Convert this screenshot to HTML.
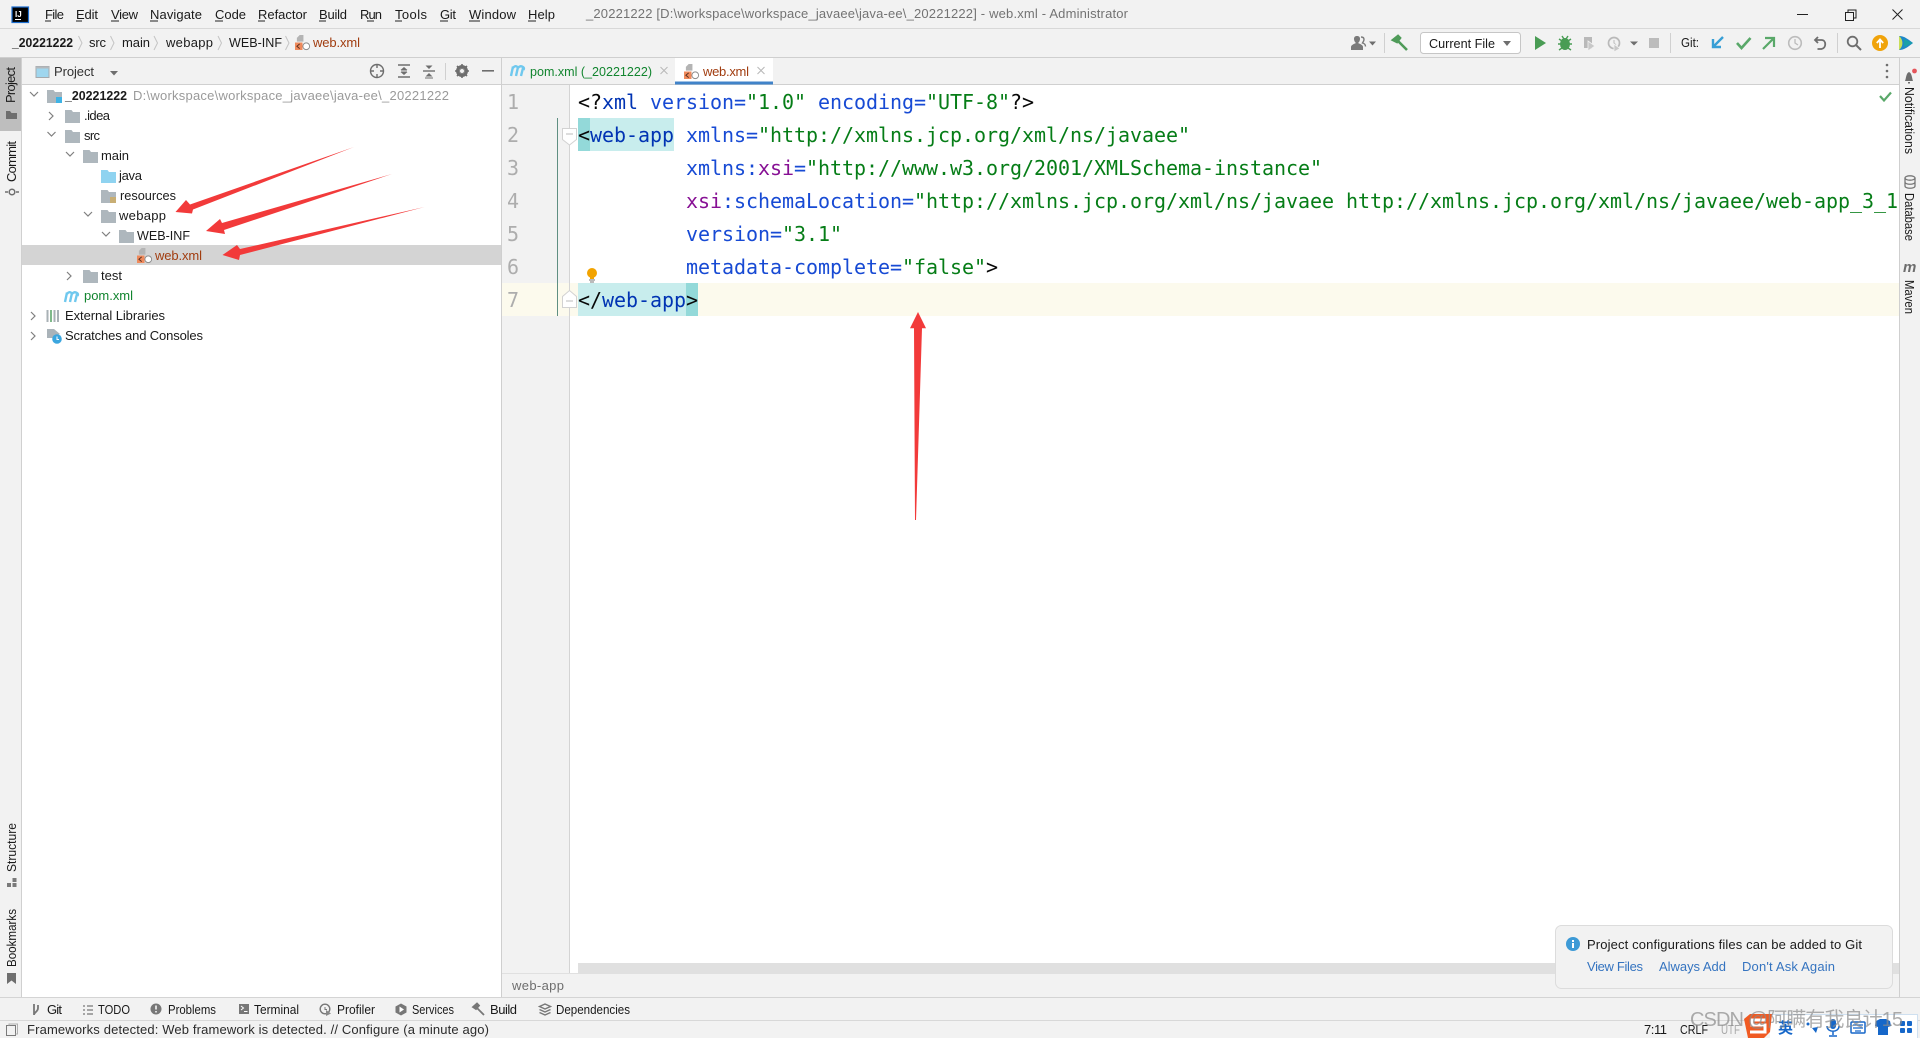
<!DOCTYPE html>
<html><head><meta charset="utf-8"><title>web.xml</title>
<style>
html,body{margin:0;padding:0;background:#f2f2f2;overflow:hidden;width:1920px;height:1038px}
svg{display:block;position:absolute;left:0;top:0}
text{font-family:"Liberation Sans","Noto Sans CJK SC",sans-serif;font-size:13px;fill:#1a1a1a;white-space:pre}
.c{font-family:"DejaVu Sans Mono","Liberation Mono",monospace;font-size:20px}
.g{fill:#adadad}.k{fill:#080808}.t{fill:#0033b3}.a{fill:#174ad4}.v{fill:#067d17}.p{fill:#871094}
.br{fill:#a13d10}.gr{fill:#12852f}.mut{fill:#9a9a9a}.lnk{fill:#3574c0}
.chev{fill:none;stroke:#7f7f7f;stroke-width:1.2}
.ic{fill:none;stroke:#6e6e6e;stroke-width:1.4}
</style></head><body>
<svg width="1920" height="1038" viewBox="0 0 1920 1038" xmlns="http://www.w3.org/2000/svg">
<defs>
<symbol id="folder" viewBox="0 0 15 13" overflow="visible"><path d="M0 0H6.5L8 2H15V13H0Z" fill="#aeb7bd"/></symbol>
<symbol id="xml" viewBox="0 0 16 16" overflow="visible"><path d="M5 0H9V7H2V3Z" fill="#b4b4b4"/><rect x="0" y="8" width="8" height="8" fill="#ef8a5c"/><path d="M5 9.5L2 12l3 2.5" fill="none" stroke="#5a3020" stroke-width="1"/><circle cx="12" cy="12" r="3.6" fill="#fff" stroke="#8c8c8c"/></symbol>
<symbol id="mvn" viewBox="0 0 16 13" overflow="visible"><path d="M1 12L3 2.5M6 12L8 3M11 12L13 4M3 4Q5 1 7.5 3M8 4Q10 1 13 3Q14.5 4 13.5 6" fill="none" stroke="#6fc8ee" stroke-width="2.4"/></symbol>
<clipPath id="ed"><rect x="570" y="85" width="1329" height="880"/></clipPath>
</defs>

<!-- base -->
<rect width="1920" height="1038" fill="#f2f2f2"/>
<rect x="0" y="28" width="1920" height="1" fill="#d8d8d8"/>
<rect x="0" y="57" width="1920" height="1" fill="#cfcfcf"/>

<!-- title bar -->
<rect x="12" y="7" width="16.5" height="15.5" fill="#000" stroke="#1d6fd0" stroke-width="1.2"/>
<text x="15" y="17" style="font-size:8px;font-weight:bold;fill:#fff">IJ</text>
<rect x="15" y="19" width="6" height="1" fill="#fff"/>
<text x="45" y="19" textLength="19">File</text><rect x="45" y="20.5" width="6" height="1" fill="#222"/>
<text x="76" y="19" textLength="22">Edit</text><rect x="76" y="20.5" width="6" height="1" fill="#222"/>
<text x="111" y="19" textLength="27">View</text><rect x="111" y="20.5" width="8" height="1" fill="#222"/>
<text x="150" y="19" textLength="52">Navigate</text><rect x="150" y="20.5" width="8" height="1" fill="#222"/>
<text x="215" y="19" textLength="31">Code</text><rect x="215" y="20.5" width="8" height="1" fill="#222"/>
<text x="258" y="19" textLength="49">Refactor</text><rect x="258" y="20.5" width="7" height="1" fill="#222"/>
<text x="319" y="19" textLength="28">Build</text><rect x="319" y="20.5" width="7" height="1" fill="#222"/>
<text x="360" y="19" textLength="22">Run</text><rect x="367" y="20.5" width="7" height="1" fill="#222"/>
<text x="395" y="19" textLength="32">Tools</text><rect x="395" y="20.5" width="7" height="1" fill="#222"/>
<text x="440" y="19" textLength="16">Git</text><rect x="440" y="20.5" width="8" height="1" fill="#222"/>
<text x="469" y="19" textLength="47">Window</text><rect x="469" y="20.5" width="11" height="1" fill="#222"/>
<text x="528" y="19" textLength="27">Help</text><rect x="528" y="20.5" width="8" height="1" fill="#222"/>
<text x="586" y="18" textLength="542" style="fill:#737373">_20221222 [D:\workspace\workspace_javaee\java-ee\_20221222] - web.xml - Administrator</text>
<rect x="1797" y="14" width="11" height="1" fill="#222"/>
<path d="M1845.5 12.5h8v8h-8zM1848 12.5v-2.5h8v8h-2.5" fill="none" stroke="#222" stroke-width="1"/>
<path d="M1892.5 9.5l10 10M1902.5 9.5l-10 10" stroke="#222" stroke-width="1" fill="none"/>

<!-- nav bar -->
<text x="12" y="47" textLength="61" lengthAdjust="spacingAndGlyphs" style="font-weight:bold">_20221222</text>
<text x="89" y="47" textLength="17">src</text>
<text x="122" y="47" textLength="28">main</text>
<text x="166" y="47" textLength="47">webapp</text>
<text x="229" y="47" textLength="53" lengthAdjust="spacingAndGlyphs">WEB-INF</text>
<use href="#xml" x="295" y="35" width="15" height="15"/>
<text x="313" y="47" textLength="47" class="br">web.xml</text>
<path d="M78.500 36l3.500 7-3.500 7M110.500 36l3.500 7-3.500 7M154 36l3.500 7-3.500 7M218 36l3.500 7-3.500 7M285.500 36l3.500 7-3.500 7" fill="none" stroke="#c4c4c4"/>

<!-- toolbar right -->
<path d="M1351 50v-3c0-2 3-3 5-4-1.500-1-2-3-2-4 0-2 1-3 3-3s3 1 3 3c0 1-.5 3-2 4 2 1 5 2 5 4v3z" fill="#7a7a7a"/><path d="M1361 37c2 0 3 1 3 2.500 0 1.500-1 2.500-1.500 3.500 2 .5 3 1.500 3 3.500" fill="none" stroke="#7a7a7a" stroke-width="1.400"/>
<path d="M1369 41.500h7l-3.500 4z" fill="#6e6e6e"/>
<rect x="1384" y="33" width="1" height="20" fill="#d0d0d0"/>
<path d="M1393 40l5-4 2 2-3 4zM1398 41l9 9" fill="#4f9b59" stroke="#4f9b59" stroke-width="2.6"/>
<rect x="1420.500" y="32.500" width="100" height="21" rx="3" fill="#fff" stroke="#c6c6c6"/>
<text x="1429" y="48" textLength="66" lengthAdjust="spacingAndGlyphs">Current File</text>
<path d="M1503 41h8l-4 5z" fill="#6e6e6e"/>
<path d="M1535 36l11 7-11 7z" fill="#499c54"/>
<ellipse cx="1565" cy="44" rx="5" ry="6" fill="#499c54"/><path d="M1559 39l3 2M1571 39l-3 2M1558 44h14M1559 50l3-2M1571 50l-3-2M1562 36l2 3M1568 36l-2 3" stroke="#499c54" stroke-width="1.4"/>
<path d="M1584 37h8v12l-3-1h-5z" fill="#b9b9b9"/><path d="M1588 41l7 5-7 5z" fill="#c8c8c8" stroke="#f2f2f2" stroke-width=".8"/>
<circle cx="1614" cy="43" r="5.500" fill="none" stroke="#b9b9b9" stroke-width="1.700"/><path d="M1614 40v3l2 2" stroke="#b9b9b9" fill="none"/><path d="M1614 44l6 4.500-6 3.500z" fill="#c8c8c8" stroke="#f2f2f2" stroke-width=".8"/>
<path d="M1630 41.500h8l-4 4z" fill="#6e6e6e"/>
<rect x="1649" y="38" width="10" height="10" fill="#bcbcbc"/>
<rect x="1670" y="33" width="1" height="20" fill="#d0d0d0"/>
<text x="1681" y="47" textLength="18" lengthAdjust="spacingAndGlyphs">Git:</text>
<path d="M1723 37l-9 9M1713 39v8h8" fill="none" stroke="#389fd6" stroke-width="2.4"/>
<path d="M1737 43l4.500 5 9-10" fill="none" stroke="#59a869" stroke-width="2.600"/>
<path d="M1763 49l10-10M1765 38h9v9" fill="none" stroke="#59a869" stroke-width="2.200"/>
<circle cx="1795" cy="43" r="6.300" fill="none" stroke="#bcbcbc" stroke-width="1.600"/><path d="M1795 39v4l3 2" fill="none" stroke="#bcbcbc" stroke-width="1.300"/>
<path d="M1818 37l-3 3 3 3M1815.500 40h6c5 0 5 8 0 9h-4" fill="none" stroke="#6e6e6e" stroke-width="1.800"/>
<rect x="1837" y="33" width="1" height="20" fill="#d0d0d0"/>
<circle cx="1852.500" cy="41.500" r="4.800" fill="none" stroke="#6e6e6e" stroke-width="1.800"/><path d="M1856 45l5 5" stroke="#6e6e6e" stroke-width="2"/>
<circle cx="1880" cy="43" r="8" fill="#f0a30a"/><path d="M1880 48v-8M1876.800 43l3.200-3.500 3.200 3.500" fill="none" stroke="#fff" stroke-width="1.800"/>
<path d="M1899 36c5 0 9 3 14 7-5 4-9 7-14 7z" fill="#1e88c8"/><path d="M1899 36c4 3 5 10 0 14z" fill="#c9de58"/><path d="M1904 39l9 4-9 4z" fill="#19a0a8"/>

<!-- left stripe -->
<rect x="0" y="58" width="21" height="73" fill="#bebebe"/>
<rect x="21" y="58" width="1" height="939" fill="#d0d0d0"/>
<text transform="translate(15,103) rotate(-90)" textLength="36">Project</text>
<path d="M6 111h4l1.500 2H17v6H6z" fill="#6e6e6e"/>
<text transform="translate(16,182) rotate(-90)" textLength="41">Commit</text>
<circle cx="12" cy="192" r="2.800" fill="none" stroke="#6e6e6e" stroke-width="1.500"/><path d="M5 192h3M16 192h3" stroke="#6e6e6e" stroke-width="1.500"/>
<text transform="translate(16,872) rotate(-90)" textLength="49" lengthAdjust="spacingAndGlyphs">Structure</text>
<path d="M12.500 878h4v4h-4zM7 883h4v4H7zM12.500 883h4v4h-4z" fill="#7a7a7a"/>
<text transform="translate(16,967) rotate(-90)" textLength="58" lengthAdjust="spacingAndGlyphs">Bookmarks</text>
<path d="M7 973h9v11l-4.500-3.500L7 984z" fill="#6e6e6e"/>

<!-- project panel -->
<rect x="22" y="85" width="479" height="912" fill="#fff"/>
<rect x="22" y="84" width="480" height="1" fill="#d0d0d0"/>
<rect x="501" y="58" width="1" height="939" fill="#cfcfcf"/>
<rect x="36" y="66.500" width="13" height="11" fill="#9fd6ee" stroke="#a4a9ad"/><rect x="36" y="66.500" width="13" height="2" fill="#b4b8bb"/>
<text x="54" y="76" textLength="40" style="fill:#333">Project</text>
<path d="M110 71h8l-4 4.500z" fill="#6e6e6e"/>
<circle cx="377" cy="71" r="6.500" fill="none" stroke="#6e6e6e" stroke-width="1.400"/><path d="M377 64v4M377 74v4M370 71h4M380 71h4" stroke="#6e6e6e" stroke-width="1.400"/>
<path d="M398 65h12M398 77h12" stroke="#6e6e6e" stroke-width="1.400"/><path d="M404 67l-3.500 3h7zM404 75l-3.500-3h7z" fill="#6e6e6e"/><path d="M401 71h6" stroke="#6e6e6e"/>
<path d="M423 71h12" stroke="#6e6e6e" stroke-width="1.400"/><path d="M429 69l-3.500-3.500h7zM429 73l-3.500 3.500h7z" fill="#6e6e6e"/><path d="M425 78h8" stroke="#6e6e6e"/>
<rect x="445" y="63" width="1" height="17" fill="#d0d0d0"/>
<circle cx="462" cy="71" r="4.500" fill="none" stroke="#6e6e6e" stroke-width="3"/><path d="M462 64v14M455 71h14M457 66l10 10M467 66l-10 10" stroke="#6e6e6e" stroke-width="1.600"/><circle cx="462" cy="71" r="2" fill="#f2f2f2"/>
<rect x="482" y="70" width="12" height="1.600" fill="#6e6e6e"/>

<!-- tree -->
<rect x="22" y="245" width="479" height="20" fill="#d4d4d4"/>
<g class="chev">
<path d="M30 92l4 4 4-4"/>
<path d="M49 112l4 4-4 4"/>
<path d="M47.500 132l4 4 4-4"/>
<path d="M66 152l4 4 4-4"/>
<path d="M84 212l4 4 4-4"/>
<path d="M102 232l4 4 4-4"/>
<path d="M67 272l4 4-4 4"/>
<path d="M31 312l4 4-4 4"/>
<path d="M31 332l4 4-4 4"/>
</g>
<use href="#folder" x="47" y="90" width="15" height="13"/><rect x="56" y="97" width="6" height="6" fill="#3eb3e5"/>
<use href="#folder" x="65" y="110" width="15" height="13"/>
<use href="#folder" x="65" y="130" width="15" height="13"/>
<use href="#folder" x="83" y="150" width="15" height="13"/>
<path d="M101 170h6.500L109 172h7v11h-15z" fill="#8fd3f0"/>
<use href="#folder" x="101" y="190" width="15" height="13"/><path d="M110 198h6M110 200h6M110 202h6" stroke="#e2a42c" stroke-width="1"/>
<use href="#folder" x="101" y="210" width="15" height="13"/>
<use href="#folder" x="119" y="230" width="15" height="13"/>
<use href="#xml" x="137" y="248" width="15" height="15"/>
<use href="#folder" x="83" y="270" width="15" height="13"/>
<use href="#mvn" x="64" y="290" width="16" height="13"/>
<path d="M47.500 310v12M51 310v12M54.500 310v12M58 310v12" stroke="#a9b1b6" stroke-width="2"/><path d="M51 310v12" stroke="#7fb98a" stroke-width="2"/>
<path d="M47 329l7 0 6 5-7 4-6 0z" fill="#aab3b9"/><circle cx="57" cy="339" r="4.800" fill="#3ba6df"/><path d="M57 336.500V339.500h2" stroke="#fff" fill="none"/>
<text x="65" y="100" textLength="62" lengthAdjust="spacingAndGlyphs" style="font-weight:bold">_20221222</text>
<text x="133" y="100" textLength="316" class="mut">D:\workspace\workspace_javaee\java-ee\_20221222</text>
<text x="84" y="120" textLength="26">.idea</text>
<text x="84" y="140" textLength="16">src</text>
<text x="101" y="160" textLength="28">main</text>
<text x="119" y="180" textLength="23">java</text>
<text x="120" y="200" textLength="56" lengthAdjust="spacingAndGlyphs">resources</text>
<text x="119" y="220" textLength="47">webapp</text>
<text x="137" y="240" textLength="53" lengthAdjust="spacingAndGlyphs">WEB-INF</text>
<text x="155" y="260" textLength="47" class="br">web.xml</text>
<text x="101" y="280" textLength="21">test</text>
<text x="84" y="300" textLength="49" class="gr">pom.xml</text>
<text x="65" y="320" textLength="100">External Libraries</text>
<text x="65" y="340" textLength="138">Scratches and Consoles</text>

<!-- editor tabs -->
<rect x="502" y="84" width="1397" height="1" fill="#d0d0d0"/>
<use href="#mvn" x="510" y="64" width="16" height="13"/>
<text x="530" y="76" textLength="122" lengthAdjust="spacingAndGlyphs" class="gr">pom.xml (_20221222)</text>
<path d="M660.500 67l7 7M667.500 67l-7 7" stroke="#b8b8b8" stroke-width="1" fill="none"/>
<rect x="675" y="58" width="98" height="26" fill="#fff"/>
<rect x="675" y="81.500" width="98" height="3" fill="#4083c9"/>
<use href="#xml" x="684" y="64" width="15" height="15"/>
<text x="703" y="76" textLength="46" class="br">web.xml</text>
<path d="M757.500 67l7 7M764.500 67l-7 7" stroke="#b8b8b8" stroke-width="1" fill="none"/>
<circle cx="1887" cy="65" r="1.300" fill="#6e6e6e"/><circle cx="1887" cy="71" r="1.300" fill="#6e6e6e"/><circle cx="1887" cy="77" r="1.300" fill="#6e6e6e"/>

<!-- editor -->
<rect x="502" y="85" width="67" height="888" fill="#f2f2f2"/>
<rect x="570" y="85" width="1329" height="888" fill="#fff"/>
<rect x="569" y="85" width="1" height="888" fill="#d4d4d4"/>
<rect x="502" y="283" width="1397" height="33" fill="#fcfaed"/>
<rect x="569" y="283" width="1" height="33" fill="#d4d4d4"/>
<rect x="557" y="118" width="1" height="198" fill="#5f8f82"/>
<rect x="578" y="118" width="96" height="33" fill="#c8eded"/><rect x="578" y="118" width="12" height="33" fill="#93d9d9"/>
<rect x="578" y="283" width="120" height="33" fill="#c8eded"/><rect x="686" y="283" width="12" height="33" fill="#93d9d9"/>
<path d="M562.500 128.500h14v11l-7 5.500-7-5.500z" fill="#fff" stroke="#d2d2d2"/><path d="M566 134h7" stroke="#bbb"/>
<path d="M562.500 307.500h14v-11l-7-6-7 6z" fill="#fff" stroke="#d2d2d2"/><path d="M566 301h7" stroke="#bbb"/>
<circle cx="592" cy="273" r="5" fill="#f2a300"/><rect x="590" y="277" width="4" height="2" fill="#f2a300"/><path d="M589 280h6M590 282h4" stroke="#777" stroke-width="1"/>

<g class="c">
<text class="c g" x="507" y="109">1</text><text class="c g" x="507" y="142">2</text><text class="c g" x="507" y="175">3</text><text class="c g" x="507" y="208">4</text><text class="c g" x="507" y="241">5</text><text class="c g" x="507" y="274">6</text><text class="c g" x="507" y="307">7</text>
</g>
<g clip-path="url(#ed)">
<text class="c" x="578" y="109" textLength="456"><tspan class="k">&lt;?</tspan><tspan class="t">xml</tspan><tspan class="a"> version=</tspan><tspan class="v">"1.0"</tspan><tspan class="a"> encoding=</tspan><tspan class="v">"UTF-8"</tspan><tspan class="k">?&gt;</tspan></text>
<text class="c" x="578" y="142" textLength="612"><tspan class="k">&lt;</tspan><tspan class="t">web-app</tspan><tspan class="a"> xmlns=</tspan><tspan class="v">"http://xmlns.jcp.org/xml/ns/javaee"</tspan></text>
<text class="c" x="686" y="175" textLength="636"><tspan class="a">xmlns:</tspan><tspan class="p">xsi</tspan><tspan class="a">=</tspan><tspan class="v">"http://www.w3.org/2001/XMLSchema-instance"</tspan></text>
<text class="c" x="686" y="208" textLength="1212"><tspan class="p">xsi</tspan><tspan class="a">:schemaLocation=</tspan><tspan class="v">"http://xmlns.jcp.org/xml/ns/javaee http://xmlns.jcp.org/xml/ns/javaee/web-app_3_1</tspan></text>
<text class="c" x="686" y="241" textLength="156"><tspan class="a">version=</tspan><tspan class="v">"3.1"</tspan></text>
<text class="c" x="686" y="274" textLength="312"><tspan class="a">metadata-complete=</tspan><tspan class="v">"false"</tspan><tspan class="k">&gt;</tspan></text>
<text class="c" x="578" y="307" textLength="120"><tspan class="k">&lt;/</tspan><tspan class="t">web-app</tspan><tspan class="k">&gt;</tspan></text>
</g>
<path d="M1880 96l4 4.500 7-8" fill="none" stroke="#59a869" stroke-width="2.200"/>

<!-- scrollbar + editor breadcrumbs -->
<rect x="578" y="963" width="1321" height="10" fill="#e0e0e0"/>
<rect x="502" y="973" width="1397" height="24" fill="#f2f2f2"/>
<rect x="502" y="973" width="1397" height="1" fill="#e0e0e0"/>
<text x="512" y="990" textLength="52" style="fill:#6e6e6e">web-app</text>

<!-- right stripe -->
<rect x="1899" y="58" width="1" height="939" fill="#cfcfcf"/>
<path d="M1905 81c1-2 1-8 4-9 3 1 3 7 4 9z" fill="#6e6e6e"/><rect x="1908" y="82" width="2" height="1.500" fill="#6e6e6e"/><circle cx="1914.500" cy="71" r="2.400" fill="#e5555b"/>
<text transform="translate(1905,87) rotate(90)" textLength="67" lengthAdjust="spacingAndGlyphs">Notifications</text>
<ellipse cx="1910" cy="178" rx="5" ry="2.200" fill="none" stroke="#777" stroke-width="1.300"/><path d="M1905 178v8c0 3 10 3 10 0v-8M1905 182c0 3 10 3 10 0" fill="none" stroke="#777" stroke-width="1.300"/>
<text transform="translate(1905,193) rotate(90)" textLength="48" lengthAdjust="spacingAndGlyphs">Database</text>
<text x="1903" y="272" style="font-size:15px;font-weight:bold;font-style:italic;fill:#6e6e6e" textLength="14">m</text>
<text transform="translate(1905,280) rotate(90)" textLength="34" lengthAdjust="spacingAndGlyphs">Maven</text>

<!-- bottom tool bar -->
<rect x="0" y="997" width="1920" height="1" fill="#d4d4d4"/>
<rect x="0" y="1020" width="1920" height="1" fill="#d8d8d8"/>
<path d="M34 1004v11M34 1015c0-3 4-3 4-7v-3" fill="none" stroke="#777" stroke-width="1.800"/>
<text x="47" y="1014" textLength="15">Git</text>
<path d="M83 1006h2M83 1010h2M83 1014h2M87 1006h6M87 1010h6M87 1014h6" stroke="#777" stroke-width="1.300"/>
<text x="98" y="1014" textLength="32" lengthAdjust="spacingAndGlyphs">TODO</text>
<circle cx="156" cy="1009" r="5.500" fill="#777"/><path d="M156 1005.500v4M156 1011v1.500" stroke="#fff" stroke-width="1.500"/>
<text x="168" y="1014" textLength="48" lengthAdjust="spacingAndGlyphs">Problems</text>
<rect x="239" y="1004" width="10" height="10" fill="#777"/><path d="M241 1006l2.500 2-2.500 2M244 1011.500h3.500" stroke="#fff" fill="none"/>
<text x="254" y="1014" textLength="45" lengthAdjust="spacingAndGlyphs">Terminal</text>
<circle cx="325" cy="1009" r="4.800" fill="none" stroke="#777" stroke-width="1.400"/><path d="M325 1007v2.500h2" stroke="#777" fill="none"/><path d="M326 1010l5 3.500-5 2.500z" fill="#888"/>
<text x="337" y="1014" textLength="38" lengthAdjust="spacingAndGlyphs">Profiler</text>
<path d="M401 1003.500l5.500 3v6l-5.500 3-5.500-3v-6z" fill="#777"/><path d="M399.500 1006.500l4.500 3-4.500 3z" fill="#fff"/>
<text x="412" y="1014" textLength="42" lengthAdjust="spacingAndGlyphs">Services</text>
<path d="M473 1007l4-3.500 2 2-3 3.500zM477 1008l7 7" fill="#777" stroke="#777" stroke-width="1.800"/>
<text x="490" y="1014" textLength="27">Build</text>
<path d="M545 1004l5.500 2.500-5.500 2.500-5.500-2.500zM539.500 1009.500l5.500 2.500 5.500-2.500M539.500 1012.500l5.500 2.500 5.500-2.500" fill="none" stroke="#777" stroke-width="1.400"/>
<text x="556" y="1014" textLength="74" lengthAdjust="spacingAndGlyphs">Dependencies</text>

<!-- status bar -->
<rect x="6.500" y="1025.500" width="9" height="10" fill="none" stroke="#7a7a7a"/><path d="M9 1025.500v-1.500h8.500v10h-2" fill="none" stroke="#b0b0b0"/>
<text x="27" y="1034" textLength="462" style="fill:#2b2b2b">Frameworks detected: Web framework is detected. // Configure (a minute ago)</text>
<text x="1644" y="1034" textLength="23">7:11</text>
<text x="1680" y="1034" textLength="28" lengthAdjust="spacingAndGlyphs">CRLF</text>
<text x="1721" y="1034" textLength="19" lengthAdjust="spacingAndGlyphs" style="fill:#a8a8a8">UTF</text>

<!-- notification -->
<rect x="1555.500" y="925.500" width="337" height="63" rx="6" fill="#f2f2f2" stroke="#dcdcdc"/>
<circle cx="1573" cy="944" r="7" fill="#3d9ad6"/><rect x="1572" y="943" width="2" height="5" fill="#fff"/><rect x="1572" y="940" width="2" height="2" fill="#fff"/>
<text x="1587" y="949" textLength="275">Project configurations files can be added to Git</text>
<text x="1587" y="971" textLength="56" class="lnk">View Files</text>
<text x="1659" y="971" textLength="67" class="lnk">Always Add</text>
<text x="1742" y="971" textLength="93" class="lnk">Don't Ask Again</text>

<!-- IME bar -->
<rect x="1770" y="1015" width="148" height="23" fill="#fff"/>
<rect x="1770" y="1014" width="148" height="1" fill="#cfe0f0"/><rect x="1917" y="1014" width="1" height="24" fill="#cfe0f0"/>
<path d="M1744 1019l6-5h22l-2 18-6 6h-16z" fill="#f05a22"/>
<path d="M1766 1020h-14v5h13v7h-15" fill="none" stroke="#fff" stroke-width="3"/>
<text x="1778" y="1033" style="font-size:15px;font-weight:bold;fill:#1667c9">英</text>
<path d="M1812 1028l6-1-2 6z" fill="#1667c9"/><circle cx="1808" cy="1024" r="1.500" fill="#1667c9"/>
<rect x="1830" y="1019" width="6" height="10" rx="3" fill="#1667c9"/><path d="M1827 1026c0 7 12 7 12 0M1833 1032v3M1829 1036h8" fill="none" stroke="#1667c9" stroke-width="1.500"/>
<rect x="1851" y="1022" width="14" height="11" rx="1" fill="none" stroke="#1667c9" stroke-width="1.500"/><path d="M1853 1025h10M1853 1028h10M1855 1031h6" stroke="#1667c9" stroke-width="1.300"/>
<path d="M1876 1021l4-2h6l4 2 1 5-3 1v8h-10v-8l-3-1z" fill="#1667c9"/>
<rect x="1900" y="1021" width="5" height="5" rx="1" fill="#1667c9"/><rect x="1907" y="1021" width="5" height="5" rx="1" fill="#1667c9"/><rect x="1900" y="1028" width="5" height="5" rx="1" fill="#1667c9"/><rect x="1907" y="1028" width="5" height="5" rx="1" fill="#1667c9"/>

<!-- watermark -->
<text x="1690" y="1026" textLength="213" style="font-size:20px;fill:#8a8a8a;fill-opacity:.7">CSDN @阿瞒有我良计15</text>

<!-- red arrows -->
<g fill="#f23a3a">
<path d="M354 147L190 204.500 186 200 175.500 212 192 213.500 193 209.500Z"/>
<path d="M392 174L222 223 220 219 206 231 225 234 224 230Z"/>
<path d="M424.500 207L240 249 237 245 222.500 255 239 260 240 255Z"/>
<path d="M918 312L926 328.300H922L916 520 915 520 914 328.300H910Z"/>
</g>
</svg>
</body></html>
